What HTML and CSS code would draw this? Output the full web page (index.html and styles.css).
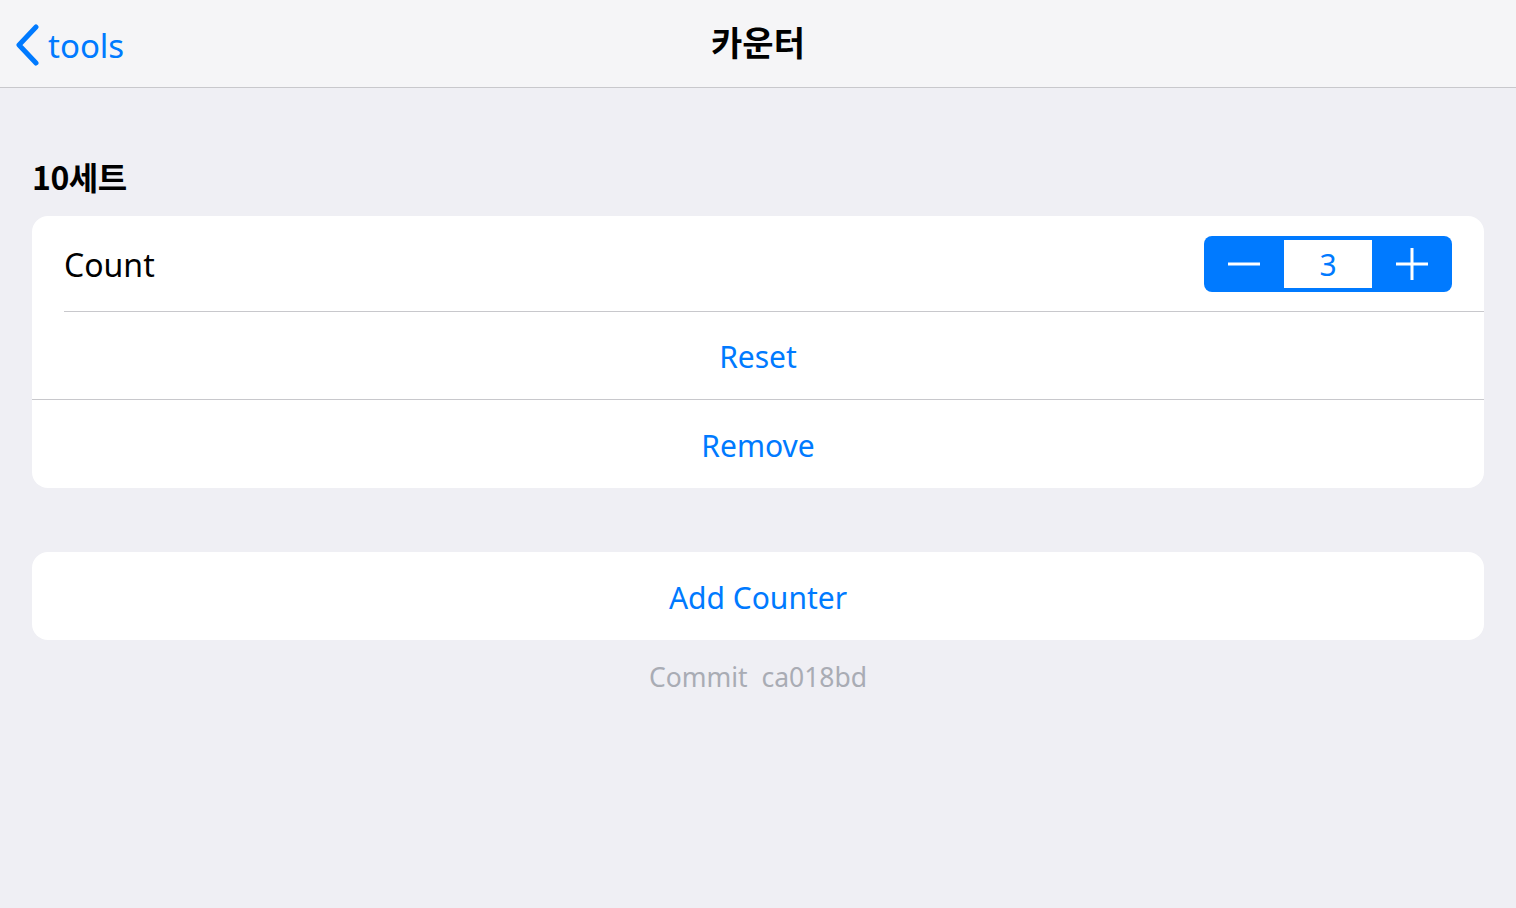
FILE: index.html
```html
<!DOCTYPE html>
<html lang="ko">
<head>
<meta charset="utf-8">
<link rel="stylesheet" href="styles.css">
</head>
<body>
<header class="nav">
  <a class="back">
    <svg class="chev" width="26" height="42" viewBox="0 0 26 42"><path d="M22 3 L5 21 L22 39" fill="none" stroke="#007aff" stroke-width="5" stroke-linecap="round" stroke-linejoin="round"/></svg>
    <span>tools</span>
  </a>
  <h1 class="title">카운터</h1>
</header>
<main class="content">
  <h2 class="section-title">10세트</h2>
  <section class="card">
    <div class="row row-count">
      <span class="label">Count</span>
      <div class="stepper">
        <button class="step"><svg width="32" height="32" viewBox="0 0 32 32"><path d="M0 16 H32" stroke="#fff" stroke-width="3"/></svg></button>
        <div class="value">3</div>
        <button class="step"><svg width="32" height="32" viewBox="0 0 32 32"><path d="M0 16 H32 M16 0 V32" stroke="#fff" stroke-width="3"/></svg></button>
      </div>
    </div>
    <div class="row action inset-sep">Reset</div>
    <div class="row action full-sep">Remove</div>
  </section>
  <section class="card card-add">
    <div class="row action">Add Counter</div>
  </section>
  <p class="commit">Commit&nbsp; ca018bd</p>
</main>
</body>
</html>
```
FILE: styles.css
```css
* { box-sizing: border-box; }
html, body { margin: 0; padding: 0; }
body {
  background: #efeff4;
  font-family: "Noto Sans", "Noto Sans CJK KR", sans-serif;
  width: 1516px;
  height: 908px;
  overflow: hidden;
}
.nav {
  height: 88px;
  background: #f5f5f7;
  border-bottom: 1px solid #c8c8cc;
  display: flex;
  align-items: center;
  justify-content: center;
  position: relative;
}
.back {
  position: absolute;
  left: 14px;
  top: 22px;
  display: flex;
  align-items: center;
  gap: 8px;
  color: #007aff;
  font-size: 33px;
  line-height: 44px;
}
.back span { margin-top: 2px; }
.chev { display: block; }
.title {
  margin: 0;
  font-family: "Noto Sans CJK KR", sans-serif;
  font-weight: 700;
  font-size: 34px;
  color: #000;
  line-height: 44px;
  margin-top: -3px;
}
.content {
  padding: 0 32px;
}
.section-title {
  margin: 0;
  padding-top: 68px;
  height: 128px;
  font-family: "Noto Sans CJK KR", sans-serif;
  font-weight: 700;
  font-size: 32px;
  line-height: 40px;
  color: #000;
  letter-spacing: -0.5px;
}
.card {
  background: #fff;
  border-radius: 16px;
  overflow: hidden;
}
.row {
  display: flex;
  align-items: center;
  font-size: 30px;
}
.row-count {
  height: 95px;
  padding: 0 32px;
  justify-content: space-between;
  color: #000;
}
.label { font-size: 32px; line-height: 40px; margin-top: 2px; }
.stepper {
  display: flex;
  align-items: stretch;
  background: #007aff;
  border-radius: 8px;
  height: 56px;
  width: 248px;
  padding: 4px 0;
}
.step {
  width: 80px;
  border: 0;
  background: transparent;
  display: flex;
  align-items: center;
  justify-content: center;
  padding: 0;
}
.value {
  width: 88px;
  background: #fff;
  color: #007aff;
  display: flex;
  align-items: center;
  justify-content: center;
  font-size: 30px;
  padding-top: 2px;
}
.action {
  height: 88px;
  justify-content: center;
  color: #007aff;
  position: relative;
  padding-top: 3px;
}
.inset-sep::before {
  content: "";
  position: absolute;
  left: 32px; right: 0; top: 0;
  border-top: 1px solid #c8c8cc;
}
.full-sep { border-top: 1px solid #c8c8cc; height: 89px; }
.card-add { margin-top: 64px; }
.commit {
  margin: 17px 0 0;
  text-align: center;
  color: #a9acb4;
  font-size: 26.5px;
  line-height: 40px;
}
```
